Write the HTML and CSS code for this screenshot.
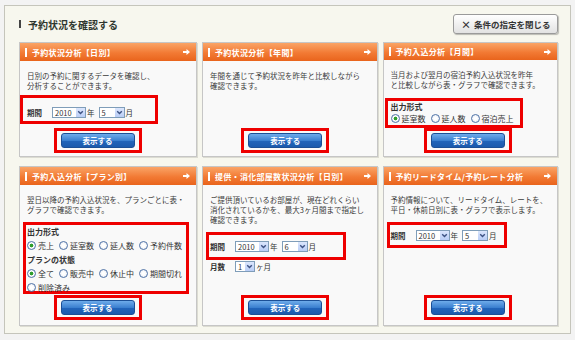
FILE: index.html
```html
<!DOCTYPE html>
<html lang="ja">
<head>
    <meta charset="UTF-8">
    <meta name="viewport" content="width=device-width, initial-scale=1.0">
    <title>予約状況を確認する</title>
    <link rel="stylesheet" href="styles.css">
</head>
<body>

<div class="frame">
    <div class="top-bar">
        <h1 class="page-title">予約状況を確認する</h1>
        <a href="#" class="close-btn"><span class="close-x">×</span>条件の指定を閉じる</a>
    </div>

    <div class="card-grid">
        <!-- 予約状況分析【日別】 -->
        <div class="card col-1">
            <div class="card-head">予約状況分析【日別】<svg class="head-arrow" width="7" height="6" viewBox="0 0 7 6"><path d="M0 2h3.5V0L7 3 3.5 6V4H0z" fill="#fff"/></svg></div>
            <div class="card-body">
                <p class="desc desc-daily">日別の予約に関するデータを確認し、<br>分析することができます。</p>
                <div class="mark mark-daily">
                    <div class="field">
                        <span class="field-label">期間</span>
                        <span class="select select-year">2010<span class="select-arrow"><svg width="9" height="9" viewBox="0 0 9 9"><path d="M2.2 3.2l2.3 2.3 2.3-2.3" fill="none" stroke="#3d5283" stroke-width="1.4"/></svg></span></span><span class="unit">年</span>
                        <span class="select select-month">5<span class="select-arrow"><svg width="9" height="9" viewBox="0 0 9 9"><path d="M2.2 3.2l2.3 2.3 2.3-2.3" fill="none" stroke="#3d5283" stroke-width="1.4"/></svg></span></span><span class="unit">月</span>
                    </div>
                </div>
                <div class="action"><span class="btn-mark"><a href="#" class="show-btn">表示する</a></span></div>
            </div>
        </div>

        <!-- 予約状況分析【年間】 -->
        <div class="card col-2">
            <div class="card-head">予約状況分析【年間】<svg class="head-arrow" width="7" height="6" viewBox="0 0 7 6"><path d="M0 2h3.5V0L7 3 3.5 6V4H0z" fill="#fff"/></svg></div>
            <div class="card-body">
                <p class="desc">年間を通じて予約状況を昨年と比較しながら<br>確認できます。</p>
                <div class="action"><span class="btn-mark"><a href="#" class="show-btn">表示する</a></span></div>
            </div>
        </div>

        <!-- 予約入込分析【月間】 -->
        <div class="card col-3">
            <div class="card-head">予約入込分析【月間】<svg class="head-arrow" width="7" height="6" viewBox="0 0 7 6"><path d="M0 2h3.5V0L7 3 3.5 6V4H0z" fill="#fff"/></svg></div>
            <div class="card-body">
                <p class="desc desc-monthly">当月および翌月の宿泊予約入込状況を昨年<br>と比較しながら表・グラフで確認できます。</p>
                <div class="mark mark-monthly">
                    <div class="opt-title">出力形式</div>
                    <div class="radios">
                        <span class="radio-item"><span class="radio checked"></span>延室数</span>
                        <span class="radio-item"><span class="radio"></span>延人数</span>
                        <span class="radio-item"><span class="radio"></span>宿泊売上</span>
                    </div>
                </div>
                <div class="action"><span class="btn-mark"><a href="#" class="show-btn">表示する</a></span></div>
            </div>
        </div>

        <!-- 予約入込分析【プラン別】 -->
        <div class="card card-low col-1">
            <div class="card-head">予約入込分析【プラン別】<svg class="head-arrow" width="7" height="6" viewBox="0 0 7 6"><path d="M0 2h3.5V0L7 3 3.5 6V4H0z" fill="#fff"/></svg></div>
            <div class="card-body">
                <p class="desc">翌日以降の予約入込状況を、プランごとに表・<br>グラフで確認できます。</p>
                <div class="mark mark-plan">
                    <div class="opt-title">出力形式</div>
                    <div class="radios">
                        <span class="radio-item"><span class="radio checked"></span>売上</span>
                        <span class="radio-item"><span class="radio"></span>延室数</span>
                        <span class="radio-item"><span class="radio"></span>延人数</span>
                        <span class="radio-item"><span class="radio"></span>予約件数</span>
                    </div>
                    <div class="opt-title opt-title-next">プランの状態</div>
                    <div class="radios">
                        <span class="radio-item"><span class="radio checked"></span>全て</span>
                        <span class="radio-item"><span class="radio"></span>販売中</span>
                        <span class="radio-item"><span class="radio"></span>休止中</span>
                        <span class="radio-item"><span class="radio"></span>期間切れ</span>
                    </div>
                    <div class="radios">
                        <span class="radio-item"><span class="radio"></span>削除済み</span>
                    </div>
                </div>
                <div class="action"><span class="btn-mark"><a href="#" class="show-btn">表示する</a></span></div>
            </div>
        </div>

        <!-- 提供・消化部屋数状況分析【日別】 -->
        <div class="card card-low col-2">
            <div class="card-head">提供・消化部屋数状況分析【日別】<svg class="head-arrow" width="7" height="6" viewBox="0 0 7 6"><path d="M0 2h3.5V0L7 3 3.5 6V4H0z" fill="#fff"/></svg></div>
            <div class="card-body">
                <p class="desc">ご提供頂いているお部屋が、現在どれくらい<br>消化されているかを、最大3ヶ月間まで指定し<br>確認できます。</p>
                <div class="mark mark-rooms">
                    <div class="field">
                        <span class="field-label">期間</span>
                        <span class="select select-year">2010<span class="select-arrow"><svg width="9" height="9" viewBox="0 0 9 9"><path d="M2.2 3.2l2.3 2.3 2.3-2.3" fill="none" stroke="#3d5283" stroke-width="1.4"/></svg></span></span><span class="unit">年</span>
                        <span class="select select-month">6<span class="select-arrow"><svg width="9" height="9" viewBox="0 0 9 9"><path d="M2.2 3.2l2.3 2.3 2.3-2.3" fill="none" stroke="#3d5283" stroke-width="1.4"/></svg></span></span><span class="unit">月</span>
                    </div>
                </div>
                <div class="field field-count">
                    <span class="field-label">月数</span>
                    <span class="select select-count">1<span class="select-arrow"><svg width="9" height="9" viewBox="0 0 9 9"><path d="M2.2 3.2l2.3 2.3 2.3-2.3" fill="none" stroke="#3d5283" stroke-width="1.4"/></svg></span></span><span class="unit">ヶ月</span>
                </div>
                <div class="action"><span class="btn-mark"><a href="#" class="show-btn">表示する</a></span></div>
            </div>
        </div>

        <!-- 予約リードタイム／予約レート分析 -->
        <div class="card card-low col-3">
            <div class="card-head">予約リードタイム/予約レート分析<svg class="head-arrow" width="7" height="6" viewBox="0 0 7 6"><path d="M0 2h3.5V0L7 3 3.5 6V4H0z" fill="#fff"/></svg></div>
            <div class="card-body">
                <p class="desc">予約情報について、リードタイム、レートを、<br>平日・休前日別に表・グラフで表示します。</p>
                <div class="mark mark-lead">
                    <div class="field">
                        <span class="field-label">期間</span>
                        <span class="select select-year">2010<span class="select-arrow"><svg width="9" height="9" viewBox="0 0 9 9"><path d="M2.2 3.2l2.3 2.3 2.3-2.3" fill="none" stroke="#3d5283" stroke-width="1.4"/></svg></span></span><span class="unit">年</span>
                        <span class="select select-month">5<span class="select-arrow"><svg width="9" height="9" viewBox="0 0 9 9"><path d="M2.2 3.2l2.3 2.3 2.3-2.3" fill="none" stroke="#3d5283" stroke-width="1.4"/></svg></span></span><span class="unit">月</span>
                    </div>
                </div>
                <div class="action"><span class="btn-mark"><a href="#" class="show-btn">表示する</a></span></div>
            </div>
        </div>
    </div>
</div>

</body>
</html>
```

FILE: styles.css
```css
body {
    margin: 0;
    background: #f3f3f3;
    font-family: "Noto Sans CJK JP", "Noto Sans", sans-serif;
    color: #333;
}

.frame {
    width: 567px;
    height: 329px;
    margin: 5px 4px 0;
    padding: 8px 12px 0 14px;
    box-sizing: border-box;
    border: 1px solid #c5c5bb;
    background: #f7f7ee;
}

.top-bar {
    display: flex;
    justify-content: space-between;
    align-items: center;
    height: 20px;
    margin-bottom: 8px;
}

.page-title {
    display: flex;
    align-items: center;
    margin: 0;
    font-size: 10px;
    font-weight: bold;
    color: #2f372f;
}

.page-title::before {
    content: "";
    width: 2px;
    height: 8px;
    margin-right: 7px;
    background: #444;
}

.close-btn {
    display: flex;
    align-items: center;
    width: 105px;
    height: 20px;
    padding-left: 7px;
    box-sizing: border-box;
    border: 1px solid #9a9a9a;
    border-radius: 3px;
    background: linear-gradient(#ffffff, #e2e2e2);
    box-shadow: 1px 1px 1px rgba(0, 0, 0, 0.25);
    font-size: 8.5px;
    font-weight: bold;
    color: #333;
    text-decoration: none;
}

.close-x {
    margin-right: 3px;
    font-size: 10px;
}

/* Karten */
.card-grid {
    display: grid;
    width: 539px;
    grid-template-columns: repeat(3, 1fr);
    grid-template-rows: 115px 160px;
    column-gap: 5px;
    row-gap: 9px;
}

.card {
    display: flex;
    flex-direction: column;
    border: 1px solid #c6c6c6;
    background: #f9f9f9;
    box-shadow: 1px 1px 0 #dcdcd2;
}

.card-head {
    display: flex;
    align-items: center;
    height: 18px;
    padding: 0 6px 0 5px;
    background: linear-gradient(#faa466, #f27a34 55%, #e9641c);
    color: #fff;
    font-size: 8px;
    font-weight: bold;
    letter-spacing: 0.3px;
    white-space: nowrap;
}

.card-head::before {
    content: "";
    flex: 0 0 2px;
    height: 9px;
    margin-right: 5px;
    background: #fff;
}

.head-arrow {
    margin-left: auto;
    flex: 0 0 auto;
}

.card-body {
    flex: 1;
    display: flex;
    flex-direction: column;
    padding: 10px 7px 3px;
}

.card-low .card-body {
    padding-bottom: 5px;
}

.desc {
    margin: 0 0 7px;
    font-size: 7.5px;
    line-height: 10px;
    color: #3a3a3a;
    white-space: nowrap;
}

.desc-daily {
    margin-bottom: 4px;
}

.desc-monthly {
    margin-bottom: 8px;
}

/* rote Markierungen */
.mark {
    box-sizing: border-box;
    margin-left: -4px;
    padding-left: 1px;
    border: 3px solid #ee0000;
}

.mark-daily {
    width: 138px;
    height: 29px;
    margin-left: -7px;
    padding: 8px 0 0 4px;
}

.mark-monthly {
    width: 138px;
    height: 30px;
    margin-left: -6px;
    padding-left: 3px;
}

.mark-monthly .opt-title {
    line-height: 11px;
}

.mark-monthly .radios {
    height: 13px;
}

.mark-plan {
    width: 166px;
    height: 72px;
    padding-top: 1px;
}

.mark-rooms {
    width: 140px;
    height: 28px;
    padding-top: 5px;
}

.mark-lead {
    width: 120px;
    height: 26px;
    padding-top: 4px;
}

/* Formularzeilen */
.field {
    display: flex;
    align-items: center;
    height: 12px;
    font-size: 7.5px;
    white-space: nowrap;
}

.field-label {
    width: 25px;
    font-weight: bold;
}

.select {
    display: flex;
    align-items: center;
    height: 11px;
    margin-right: 1px;
    padding-left: 2px;
    box-sizing: border-box;
    border: 1px solid #7f9db9;
    background: #fff;
    font-size: 7.5px;
    line-height: 9px;
}

.select-year {
    width: 34px;
}

.select-month {
    width: 26px;
}

.select-count {
    width: 20px;
}

.select-arrow {
    display: flex;
    width: 9px;
    height: 9px;
    margin-left: auto;
    background: linear-gradient(#dbe6fd, #b9cdf6);
}

.unit {
    margin-right: 4px;
}

.opt-title {
    font-size: 8px;
    font-weight: bold;
    line-height: 12px;
}

.opt-title-next {
    margin-top: 2px;
}

.radios {
    display: flex;
    align-items: center;
    height: 14px;
    font-size: 8px;
    white-space: nowrap;
}

.radio-item {
    display: flex;
    align-items: center;
    margin-right: 5px;
}

.radio {
    width: 9px;
    height: 9px;
    margin-right: 2px;
    box-sizing: border-box;
    border: 1px solid #4f72a6;
    border-radius: 50%;
    background: radial-gradient(circle, #ffffff 30%, #dde3ee);
}

.radio.checked {
    background: radial-gradient(circle, #2e9e2e 0 1.6px, #ffffff 2.2px, #dde3ee);
}

/* Buttons */
.action {
    display: flex;
    justify-content: center;
    margin-top: auto;
}

.col-1 .action {
    padding-right: 21px;
}

.col-2 .action {
    padding-right: 9px;
}

.col-3 .action {
    padding-right: 5px;
}

.btn-mark {
    display: block;
    padding: 2px 4px;
    border: 3px solid #ee0000;
}

.show-btn {
    display: block;
    width: 74px;
    height: 15px;
    box-sizing: border-box;
    border: 1px solid #1b4f96;
    border-radius: 3px;
    background: linear-gradient(#6eabea, #3b80d0 50%, #2265bb 52%, #1c5aad);
    color: #fff;
    font-size: 7.5px;
    font-weight: bold;
    line-height: 13px;
    text-align: center;
    text-decoration: none;
}
```
